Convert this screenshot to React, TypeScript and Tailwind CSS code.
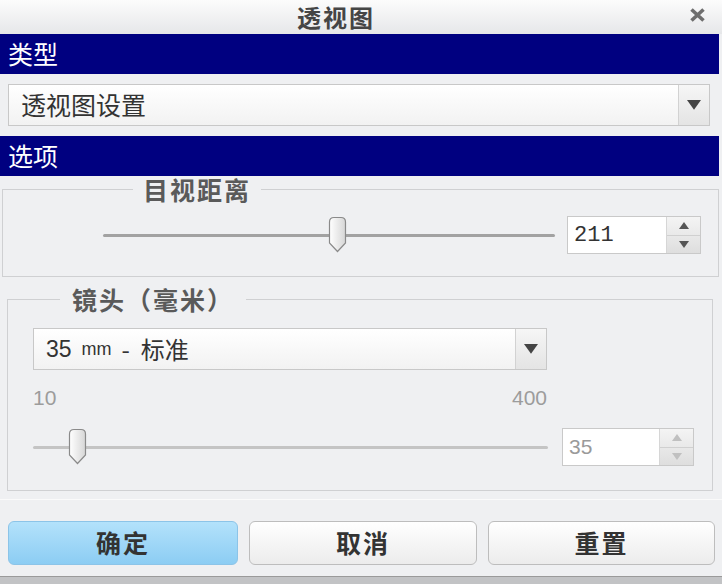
import React from "react";

const CJK = "font-['Noto_Sans_CJK_SC','Noto_Sans',sans-serif]";

function Thumb() {
  return (
    <svg width="19" height="37" viewBox="0 0 19 37" className="shrink-0">
      <defs>
        <linearGradient id="thumbFill" x1="0" x2="1" y1="0" y2="0">
          <stop offset="0" stopColor="#ffffff" />
          <stop offset="1" stopColor="#d6d6d6" />
        </linearGradient>
      </defs>
      <path
        d="M1.5 6 Q1.5 1.5 6 1.5 H13 Q17.5 1.5 17.5 6 V27 L9.5 35.5 L1.5 27 Z"
        fill="url(#thumbFill)"
        stroke="#8a8a8a"
        strokeWidth="1.2"
      />
    </svg>
  );
}

function Slider({ width, pos, disabled }: { width: number; pos: number; disabled?: boolean }) {
  return (
    <div className="relative flex h-[38px] items-center" style={{ width }}>
      <div className={`h-[3px] w-full rounded-full ${disabled ? "bg-[#c4c4c4]" : "bg-[#a2a2a2]"}`} />
      <div className="absolute top-0" style={{ left: pos }}>
        <Thumb />
      </div>
    </div>
  );
}

function Arrow({ up, color, size = 10 }: { up?: boolean; color: string; size?: number }) {
  return (
    <svg width={size} height={size * 0.7} viewBox="0 0 10 7">
      <path d={up ? "M5 0 L10 7 H0 Z" : "M0 0 H10 L5 7 Z"} fill={color} />
    </svg>
  );
}

function SpinBox({ value, width, disabled }: { value: string; width: number; disabled?: boolean }) {
  return (
    <div className="flex h-[38px] border border-[#c9c9c9] bg-white" style={{ width }}>
      <div
        className={`flex flex-1 items-center pl-[6px] ${
          disabled
            ? "font-['Liberation_Sans',sans-serif] text-[21px] text-[#9a9a9a]"
            : "font-['Liberation_Mono',monospace] text-[22px] text-[#333]"
        }`}
      >
        {value}
      </div>
      <div className="flex w-[34px] flex-col border-l border-[#d6d6d6] bg-gradient-to-b from-[#f4f4f4] to-[#dedede]">
        <div className="flex flex-1 items-center justify-center border-b border-[#d0d0d0]">
          <Arrow up color={disabled ? "#c0c0c0" : "#555"} />
        </div>
        <div className="flex flex-1 items-center justify-center">
          <Arrow color={disabled ? "#c0c0c0" : "#555"} />
        </div>
      </div>
    </div>
  );
}

function Dropdown({ children, className }: { children: React.ReactNode; className: string }) {
  return (
    <div className={`flex border border-[#c8c8c8] bg-gradient-to-b from-white to-[#f2f2f2] ${className}`}>
      <div className="flex flex-1 items-center pl-[12px] text-[#333]">{children}</div>
      <div className="flex w-[31px] items-center justify-center border-l border-[#d2d2d2] bg-gradient-to-b from-[#f6f6f6] to-[#e4e4e4]">
        <Arrow color="#444" size={14} />
      </div>
    </div>
  );
}

export default function App() {
  return (
    <div className={`flex h-[584px] w-[722px] flex-col overflow-hidden bg-[#eff0f2] ${CJK}`}>
      {/* title bar */}
      <div className="flex h-[34px] shrink-0 bg-gradient-to-b from-[#fcfcfc] to-[#e6e7e9]">
        <div className="flex flex-1 items-center justify-center text-[24px] font-bold leading-[30px] tracking-[2px] text-[#454545]">
          透视图
        </div>
        <div className="flex w-[50px] items-start justify-center pt-[7px]">
          <svg width="17" height="16" viewBox="0 0 17 16">
            <path d="M2.5 2.5 L14.5 13.5 M14.5 2.5 L2.5 13.5" stroke="#6e6e6e" strokeWidth="3.6" />
          </svg>
        </div>
      </div>

      <div className="mr-[3px] flex h-[40px] items-center bg-[#000080] pl-[8px] text-[25px] text-white">类型</div>

      <Dropdown className="ml-[8px] mr-[12px] mt-[10px] h-[42px] text-[25px]">透视图设置</Dropdown>

      <div className="mr-[3px] mt-[10px] flex h-[40px] items-center bg-[#000080] pl-[8px] text-[25px] text-white">选项</div>

      {/* 目视距离 */}
      <fieldset className="ml-[2px] mr-[3px] border border-[#cfd0d2] pb-[22px] pl-[100px] pr-[16px]">
        <legend className="ml-[30px] px-[10px] text-[25px] font-bold leading-[26px] tracking-[2px] text-[#5a5a5a]">
          目视距离
        </legend>
        <div className="mt-[14px] flex items-center gap-[12px]">
          <Slider width={452} pos={225} />
          <SpinBox value="211" width={134} />
        </div>
      </fieldset>

      {/* 镜头 */}
      <fieldset className="ml-[7px] mr-[9px] mt-[9px] border border-[#cfd0d2] pb-[24px] pl-[25px] pr-[17px]">
        <legend className="ml-[27px] px-[12px] text-[25px] font-bold leading-[26px] tracking-[2px] text-[#5a5a5a]">
          镜头（毫米）
        </legend>
        <Dropdown className="mt-[16px] h-[42px] w-[514px] text-[24px]">
          <span className="font-['Liberation_Sans',sans-serif] text-[23px]">35</span>
          <span className="ml-[10px] font-['Liberation_Sans',sans-serif] text-[18px]">mm</span>
          <span className="ml-[10px] whitespace-pre">-  标准</span>
        </Dropdown>
        <div className="mt-[16px] flex w-[514px] justify-between font-['Liberation_Sans',sans-serif] text-[21px] leading-[24px] text-[#9c9c9c]">
          <span>10</span>
          <span>400</span>
        </div>
        <div className="mt-[18px] flex items-center gap-[14px]">
          <Slider width={515} pos={35} disabled />
          <SpinBox value="35" width={132} disabled />
        </div>
      </fieldset>

      <div className="mt-[8px] border-t border-[#fafafa]" />

      {/* buttons */}
      <div className="mt-[21px] flex gap-[11px] pl-[8px] text-[25px] font-bold text-[#333]">
        <button className="h-[44px] w-[230px] rounded-[6px] border border-[#8cc4e8] bg-gradient-to-b from-[#b3e2fb] to-[#8ccdf3] tracking-[2px]">
          确定
        </button>
        <button className="h-[44px] w-[228px] rounded-[6px] border border-[#bdbdbd] bg-gradient-to-b from-white to-[#ececec] tracking-[2px]">
          取消
        </button>
        <button className="h-[44px] w-[227px] rounded-[6px] border border-[#bdbdbd] bg-gradient-to-b from-white to-[#ececec] tracking-[2px]">
          重置
        </button>
      </div>

      <div className="mt-auto h-[8px] border-t border-[#9a9a9a] bg-[#c2c3c5]" />
    </div>
  );
}
